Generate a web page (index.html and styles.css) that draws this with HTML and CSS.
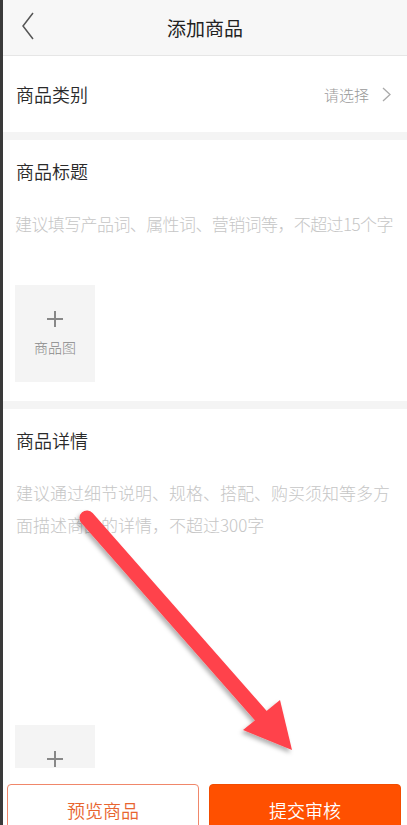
FILE: index.html
```html
<!DOCTYPE html>
<html lang="zh-CN">
<head>
    <meta charset="UTF-8">
    <meta name="viewport" content="width=device-width, initial-scale=1.0">
    <title>添加商品</title>
    <link rel="stylesheet" href="styles.css">
</head>
<body>
    <div class="page">
        <header class="header">
            <svg class="back" width="14" height="28" viewBox="0 0 14 28">
                <polyline points="12,1 2,14 12,27" fill="none" stroke="#555" stroke-width="1.5"/>
            </svg>
            <h1>添加商品</h1>
        </header>

        <main class="content">
            <section class="row">
                <span class="label">商品类别</span>
                <span class="select">请选择
                    <svg width="9" height="15" viewBox="0 0 9 15">
                        <polyline points="1,1 8,7.5 1,14" fill="none" stroke="#aaa" stroke-width="1.3"/>
                    </svg>
                </span>
            </section>

            <section class="block">
                <h2 class="label">商品标题</h2>
                <p class="hint">建议填写产品词、属性词、营销词等，不超过15个字</p>
                <div class="pic">
                    <span class="plus"></span>
                    <span class="pic-text">商品图</span>
                </div>
            </section>

            <section class="block">
                <h2 class="label">商品详情</h2>
                <p class="hint multi">建议通过细节说明、规格、搭配、购买须知等多方面描述商品的详情，不超过300字</p>
                <div class="pic">
                    <span class="plus"></span>
                </div>
            </section>
        </main>

        <footer class="footer">
            <button class="btn btn-outline">预览商品</button>
            <button class="btn btn-fill">提交审核</button>
        </footer>

        <svg class="arrow" width="407" height="825" viewBox="0 0 407 825">
            <defs>
                <filter id="shadow" x="-20%" y="-20%" width="140%" height="140%">
                    <feDropShadow dx="-2" dy="3" stdDeviation="2" flood-color="#000" flood-opacity="0.3"/>
                </filter>
            </defs>
            <g filter="url(#shadow)" fill="#ff434b">
                <line x1="87" y1="518" x2="262" y2="717" stroke="#ff434b" stroke-width="15" stroke-linecap="round"/>
                <polygon points="243,730 280,700 292,750"/>
            </g>
        </svg>
    </div>
</body>
</html>
```

FILE: styles.css
```css
body {
    margin: 0;
    background-color: #3a3a3a;
    font-family: "Noto Sans CJK SC", "Noto Sans", sans-serif;
    font-weight: 300;
}
.page {
    position: relative;
    width: 404px;
    height: 825px;
    margin-left: 3px;
    background-color: #f4f4f4;
    display: flex;
    flex-direction: column;
    overflow: hidden;
}
.header {
    height: 55px;
    flex-shrink: 0;
    background-color: #f7f7f7;
    border-bottom: 1px solid #e6e6e6;
    display: flex;
    align-items: center;
    justify-content: center;
    position: relative;
}
.header h1 {
    margin: 0;
    font-size: 19px;
    font-weight: 400;
    color: #222;
}
.back {
    position: absolute;
    left: 18px;
    top: 12px;
}
.content {
    flex: 1;
    overflow: hidden;
}
.row {
    height: 76px;
    background-color: #fff;
    padding: 0 16px 0 13px;
    display: flex;
    align-items: center;
    justify-content: space-between;
    margin-bottom: 8px;
}
.label {
    margin: 0;
    font-size: 18px;
    font-weight: 350;
    color: #2a2a2a;
    line-height: 24px;
}
.select {
    display: flex;
    align-items: center;
    gap: 13px;
    font-size: 15px;
    color: #999;
}
.block {
    background-color: #fff;
    padding: 19px 13px 19px 12px;
    margin-bottom: 8px;
}
.block .label {
    padding-left: 1px;
}
.hint {
    margin: 29px 0 0;
    font-size: 17px;
    line-height: 24px;
    color: #c6c6c6;
    white-space: nowrap;
    letter-spacing: -0.6px;
}
.hint.multi {
    white-space: normal;
    line-height: 32px;
    margin-top: 25px;
    letter-spacing: 0;
    padding-left: 1px;
}
.pic {
    width: 80px;
    height: 97px;
    margin-top: 49px;
    background-color: #f4f4f4;
    display: flex;
    flex-direction: column;
    align-items: center;
    padding-top: 26px;
    box-sizing: border-box;
}
.block .multi + .pic {
    margin-top: 184px;
}
.plus {
    position: relative;
    width: 16px;
    height: 16px;
}
.plus::before,
.plus::after {
    content: "";
    position: absolute;
    background-color: #888;
}
.plus::before {
    left: 0;
    top: 7px;
    width: 16px;
    height: 2px;
}
.plus::after {
    left: 7px;
    top: 0;
    width: 2px;
    height: 16px;
}
.pic-text {
    margin-top: 10px;
    font-size: 14px;
    color: #888;
}
.footer {
    height: 57px;
    flex-shrink: 0;
    background-color: #fff;
    padding: 16px 6px 0 4px;
    box-sizing: border-box;
    display: flex;
    gap: 10px;
}
.btn {
    flex: 1;
    height: 48px;
    border-radius: 4px;
    font-family: inherit;
    font-weight: 350;
    font-size: 18px;
    padding: 4px 0 0;
}
.btn-outline {
    background-color: #fff;
    border: 1px solid #f0876a;
    color: #e8652f;
}
.btn-fill {
    background-color: #ff5000;
    border: 1px solid #f24c00;
    color: #fff;
}
.arrow {
    position: absolute;
    left: -3px;
    top: 0;
    pointer-events: none;
}
```
